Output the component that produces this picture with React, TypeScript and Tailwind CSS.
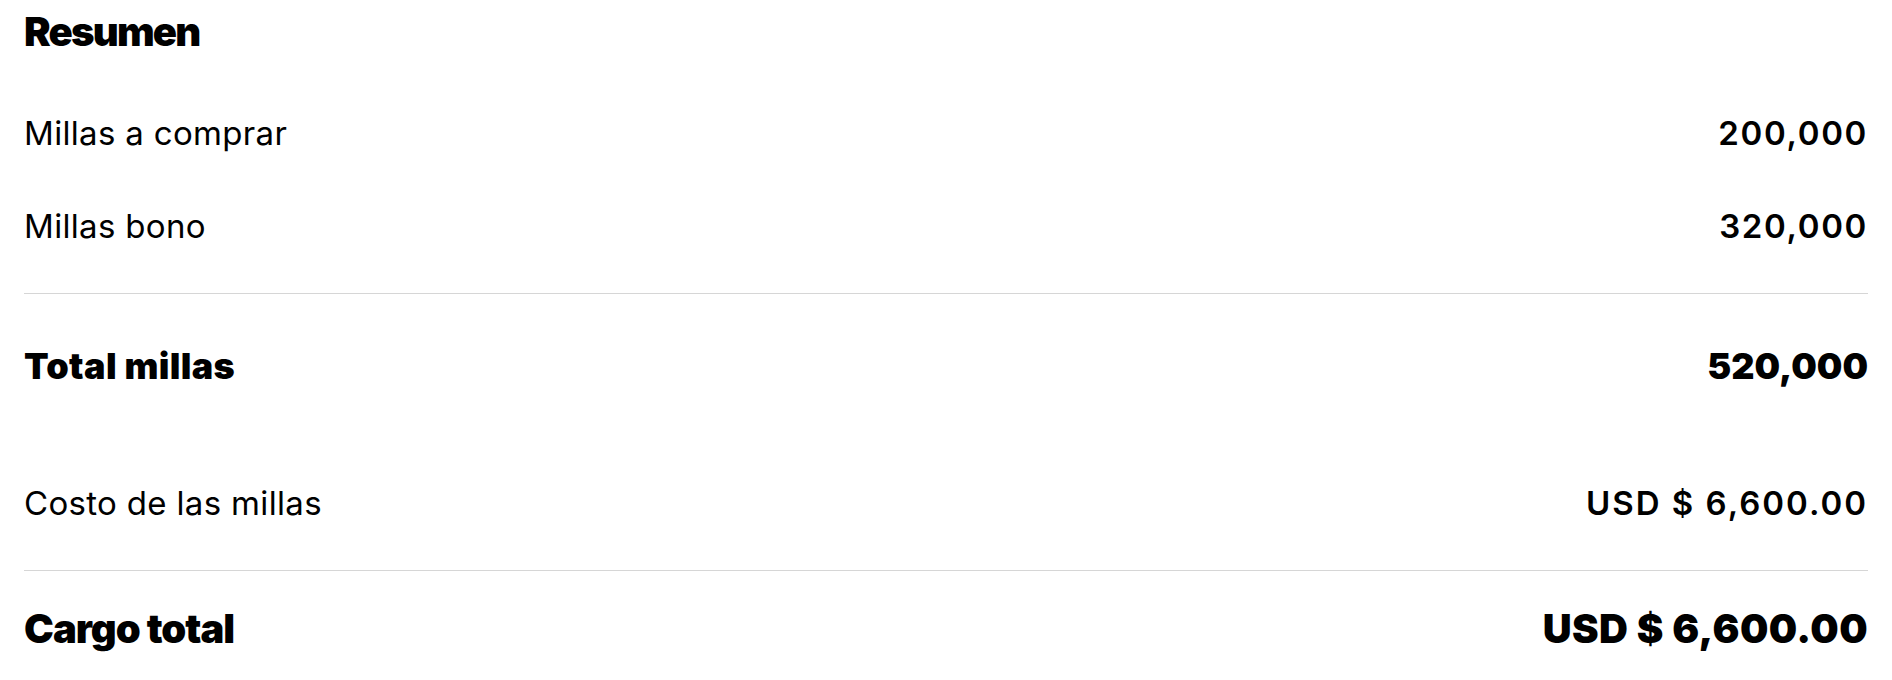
export default function App() {
    const rows = [
        { label: 'Millas a comprar', value: '200,000' },
        { label: 'Millas bono', value: '320,000' },
    ];

    return (
        <div className="min-h-[680px] bg-white px-6 pt-3 text-black" style={{ fontFamily: 'Inter, "Noto Sans", sans-serif' }}>
            <h2 className="text-[40px] font-black leading-none tracking-[-0.045em]">Resumen</h2>

            <div className="mt-[65px] space-y-[60px]">
                {rows.map((row) => (
                    <div key={row.label} className="flex items-baseline justify-between text-[33px] leading-none">
                        <span className="tracking-[0.01em]">{row.label}</span>
                        <span className="font-semibold tracking-[0.05em]">{row.value}</span>
                    </div>
                ))}
            </div>

            <div className="mt-[50px] h-px bg-[#d6d6d6]" />

            <div className="mt-[54px] flex items-baseline justify-between text-[36px] font-black leading-none">
                <span className="tracking-[0.01em]">Total millas</span>
                <span>520,000</span>
            </div>

            <div className="mt-[103px] flex items-baseline justify-between text-[33px] leading-none">
                <span className="tracking-[0.01em]">Costo de las millas</span>
                <span className="font-semibold tracking-[0.06em]">USD $ 6,600.00</span>
            </div>

            <div className="mt-[50px] h-px bg-[#d6d6d6]" />

            <div className="mt-[38px] flex items-baseline justify-between text-[40px] font-black leading-none">
                <span className="tracking-[-0.025em]">Cargo total</span>
                <span className="tracking-[0.01em]">USD $ 6,600.00</span>
            </div>
        </div>
    );
}
